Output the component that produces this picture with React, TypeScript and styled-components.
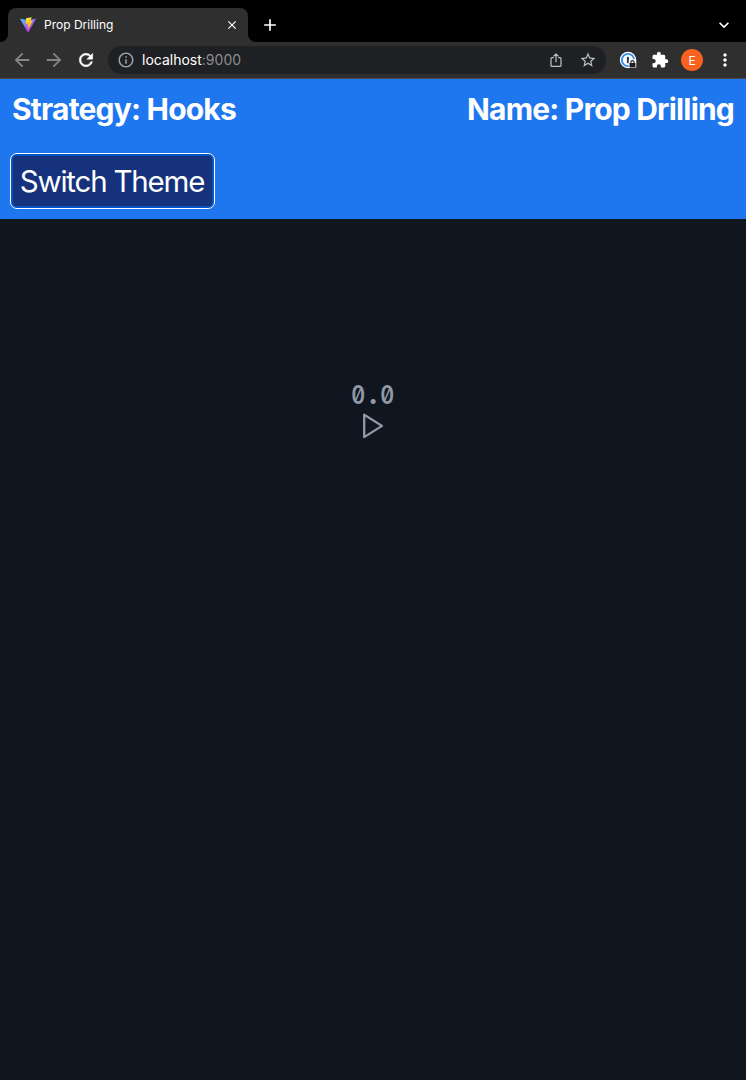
import React from 'react';
import styled, { createGlobalStyle } from 'styled-components';
import {
  MdArrowBack, MdArrowForward, MdRefresh, MdInfoOutline, MdStarBorder,
  MdExtension, MdMoreVert, MdClose, MdAdd, MdExpandMore,
} from 'react-icons/md';

const GlobalStyle = createGlobalStyle`
  *, *::before, *::after { box-sizing: border-box; }
  body { margin: 0; background: #101620; font-family: Inter, sans-serif; }
  svg { display: block; flex: none; }
`;

const Window = styled.div`
  display: flex;
  flex-direction: column;
  width: 100%;
  height: 1080px;
  overflow: hidden;
`;

const TabStrip = styled.div`
  display: flex;
  align-items: center;
  height: 42px;
  padding: 8px 12px 0 8px;
  background: #000;
  color: #fff;
`;

const Tab = styled.div`
  position: relative;
  display: flex;
  align-items: center;
  width: 240px;
  height: 34px;
  padding: 0 9px 0 12px;
  border-radius: 8px 8px 0 0;
  background: #2f2f2f;

  &::before, &::after {
    content: '';
    position: absolute;
    bottom: 0;
    width: 8px;
    height: 8px;
  }
  &::before {
    left: -8px;
    background: radial-gradient(circle at 0 0, transparent 7.5px, #2f2f2f 8.5px);
  }
  &::after {
    right: -8px;
    background: radial-gradient(circle at 100% 0, transparent 7.5px, #2f2f2f 8.5px);
  }
`;

const TabTitle = styled.span`
  flex: 1;
  margin-left: 8px;
  padding-bottom: 2px;
  font-size: 12px;
`;

const NewTab = styled.div`
  margin-left: 12px;
  flex: 1;
`;

const Toolbar = styled.div`
  display: flex;
  align-items: center;
  height: 37px;
  padding: 0 11px;
  background: #2f2f2f;
  border-bottom: 1px solid #484848;
  color: #fff;
`;

const NavButton = styled.div<{ $muted?: boolean }>`
  display: flex;
  justify-content: center;
  width: 22px;
  margin-right: 10px;
  color: ${(p) => (p.$muted ? '#858585' : '#fff')};

  path:last-child {
    stroke: currentColor;
    stroke-width: ${(p) => (p.$muted ? 0 : 0.6)};
  }
`;

const AddressBar = styled.div`
  display: flex;
  align-items: center;
  flex: none;
  width: 498px;
  height: 28px;
  margin-left: 1px;
  padding: 0 9px;
  border-radius: 14px;
  background: #1f2023;
  color: #9aa0a6;
`;

const Url = styled.span`
  flex: 1;
  margin-left: 7px;
  padding-bottom: 2px;
  font-size: 14px;
  color: #fff;
`;

const Port = styled.span`
  color: #8b8d90;
`;

const AddressActions = styled.div`
  display: flex;
  align-items: center;
  gap: 16px;
  color: #c0c1c3;
`;

const Extensions = styled.div`
  display: flex;
  align-items: center;
  gap: 14px;
  margin-left: 13px;
`;

const Avatar = styled.div`
  display: flex;
  align-items: center;
  justify-content: center;
  width: 22px;
  height: 22px;
  margin: 0 -2px;
  border-radius: 50%;
  background: #f76220;
  font-size: 12px;
`;

const Header = styled.header`
  display: flex;
  flex-direction: column;
  align-items: flex-start;
  height: 140px;
  padding: 12px 12px 0 10px;
  background: #1f77f0;
  color: #fff;
`;

const HeadingRow = styled.div`
  display: flex;
  justify-content: space-between;
  width: 100%;
  padding-left: 2px;
`;

const Heading = styled.h1`
  margin: 0;
  font-size: 30px;
  line-height: 36px;
  font-weight: 700;
  letter-spacing: -0.8px;
  white-space: nowrap;
`;

const ThemeButton = styled.button`
  width: 205px;
  height: 56px;
  margin-top: 26px;
  padding: 0 1px 0 0;
  border: 1px solid #fff;
  border-radius: 7px;
  background: #16327c;
  box-shadow: inset 0 0 0 2px #0455c4;
  color: #fff;
  font: 400 29.5px/54px Inter, sans-serif;
  letter-spacing: -1.2px;
  white-space: nowrap;
`;

const Main = styled.main`
  display: flex;
  flex: 1;
  flex-direction: column;
  align-items: center;
  padding-top: 160px;
  background: #101620;
  color: #9199a5;
`;

const Time = styled.div`
  display: flex;
  justify-content: center;
  height: 31px;
  font-size: 25px;
  line-height: 32px;
  font-feature-settings: 'zero' 1, 'tnum' 1;
`;

const Digit = styled.span<{ $point?: boolean }>`
  display: flex;
  justify-content: center;
  width: 14.5px;
  font-weight: ${(p) => (p.$point ? 900 : 600)};
  transform: scaleX(${(p) => (p.$point ? 1 : 0.86)});
`;

const ViteLogo = () => (
  <svg width="16" height="16" viewBox="0 0 410 404">
    <defs>
      <linearGradient id="shield" x1="6" y1="33" x2="235" y2="344" gradientUnits="userSpaceOnUse">
        <stop stopColor="#41d1ff" />
        <stop offset="1" stopColor="#bd34fe" />
      </linearGradient>
      <linearGradient id="bolt" x1="195" y1="9" x2="236" y2="293" gradientUnits="userSpaceOnUse">
        <stop stopColor="#ffea83" />
        <stop offset=".083" stopColor="#ffdd35" />
        <stop offset="1" stopColor="#ffa800" />
      </linearGradient>
    </defs>
    <path fill="url(#shield)" d="M399.6 59.5 215.6 388.5c-3.8 6.8-13.6 6.8-17.4.1L10.6 59.6c-4.2-7.3 2.1-16.1 10.4-14.7l184.2 32.9c1.2.2 2.4.2 3.5 0l180.3-32.8c8.3-1.5 14.7 7.2 10.6 14.5Z" />
    <path fill="url(#bolt)" d="M293 1.6 156.8 28.2c-2.2.4-3.9 2.3-4 4.6l-8.4 141.5c-.2 3.3 2.9 5.9 6.1 5.2l37.9-8.8c3.5-.8 6.8 2.3 6 5.9l-11.3 55.1c-.7 3.7 2.7 6.9 6.4 5.8l23.4-7.1c3.6-1.1 7.1 2.1 6.3 5.8l-17.9 86.6c-1.1 5.4 6.1 8.4 9.1 3.7l2-3.1 111-221.5c1.8-3.7-1.4-7.9-5.4-7.1l-39 7.5c-3.7.7-6.8-2.7-5.8-6.3l25.5-88.2c1-3.6-2.1-7-5.7-6.2Z" />
  </svg>
);

const ShareIcon = () => (
  <svg width="14" height="16" viewBox="0 0 14 16" fill="none" stroke="currentColor" strokeWidth="1.2" strokeLinejoin="round">
    <path d="M4.8 5.6H3A1 1 0 0 0 2 6.6V13.4A1 1 0 0 0 3 14.4H11A1 1 0 0 0 12 13.4V6.6A1 1 0 0 0 11 5.6H9.2M7 10.3V2M4.5 4.3 7 1.8 9.5 4.3" />
  </svg>
);

const PasswordIcon = () => (
  <svg width="18" height="18" viewBox="0 0 18 18">
    <circle cx="9" cy="9" r="8.2" fill="#fff" />
    <circle cx="9" cy="9" r="6.1" fill="#fff" stroke="#2f93f0" strokeWidth="1.9" />
    <rect x="7.9" y="5.8" width="2" height="6.5" rx=".6" fill="#25364d" />
    <rect x="9.7" y="8.2" width="7.6" height="8.8" rx="1.5" fill="#fff" />
    <rect x="10.5" y="12" width="6" height="4.4" rx=".6" fill="#1f2023" />
    <path d="M11.9 12.5V11.2a1.6 1.6 0 0 1 3.2 0V12.5" fill="none" stroke="#1f2023" strokeWidth="1.1" />
  </svg>
);

const PlayIcon = () => (
  <svg width="32" height="32" viewBox="0 0 32 32" fill="none" stroke="currentColor" strokeWidth="2.3" strokeLinejoin="round">
    <path d="M7.2 4.7V27.1L25 15.9Z" />
  </svg>
);

export default function App() {
  return (
    <Window>
      <GlobalStyle />
      <TabStrip>
        <Tab>
          <ViteLogo />
          <TabTitle>Prop Drilling</TabTitle>
          <MdClose size={14} />
        </Tab>
        <NewTab><MdAdd size={20} /></NewTab>
        <MdExpandMore size={20} />
      </TabStrip>
      <Toolbar>
        <NavButton $muted><MdArrowBack size={22} /></NavButton>
        <NavButton $muted><MdArrowForward size={22} /></NavButton>
        <NavButton><MdRefresh size={20} /></NavButton>
        <AddressBar>
          <MdInfoOutline size={18} />
          <Url>localhost<Port>:9000</Port></Url>
          <AddressActions>
            <ShareIcon />
            <MdStarBorder size={18} />
          </AddressActions>
        </AddressBar>
        <Extensions>
          <PasswordIcon />
          <MdExtension size={18} />
          <Avatar>E</Avatar>
          <MdMoreVert size={20} />
        </Extensions>
      </Toolbar>
      <Header>
        <HeadingRow>
          <Heading>Strategy: Hooks</Heading>
          <Heading>Name: Prop Drilling</Heading>
        </HeadingRow>
        <ThemeButton>Switch Theme</ThemeButton>
      </Header>
      <Main>
        <Time><Digit>0</Digit><Digit $point>.</Digit><Digit>0</Digit></Time>
        <PlayIcon />
      </Main>
    </Window>
  );
}
